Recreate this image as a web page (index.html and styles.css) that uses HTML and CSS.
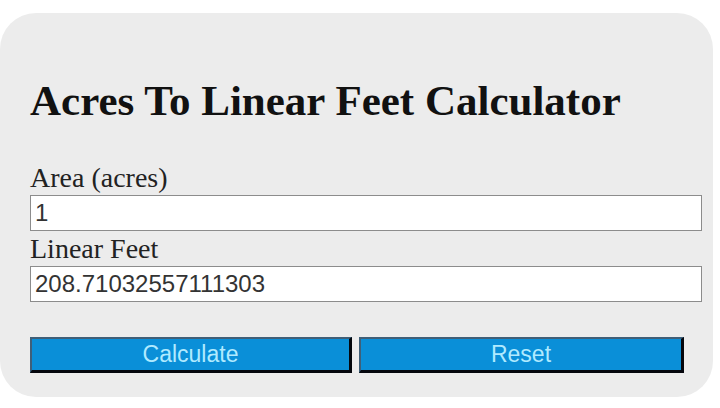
FILE: index.html
```html
<!DOCTYPE html>
<html>
	<head>
		<link rel="stylesheet" href="styles.css">
		<title>Acres To Linear Feet Calculator</title>
	</head>
	<body>
		<main class="calc">
			<h1 class="calc-title">Acres To Linear Feet Calculator</h1>
			<label class="calc-label" for="acres">Area (acres)</label>
			<input class="calc-input" id="acres" type="text" value="1">
			<label class="calc-label" for="linear_feet">Linear Feet</label>
			<input class="calc-input" id="linear_feet" type="text" value="208.71032557111303" readonly>
			<div class="calc-buttons">
				<button class="calc-btn" onclick="calculate();">Calculate</button>
				<button class="calc-btn" onclick="reset_form();">Reset</button>
			</div>
		</main>
		<script>
			function calculate(){
				var acres = parseFloat(document.getElementById("acres").value);
				if(isNaN(acres)){ return; }
				// one acre is 43560 square feet, side of the square
				document.getElementById("linear_feet").value = Math.sqrt(acres * 43560);
			}

			function reset_form(){
				document.getElementById("acres").value = "";
				document.getElementById("linear_feet").value = "";
			}
		</script>
	</body>
</html>
```
FILE: styles.css
```css
body{ margin: 0; background: #ffffff; }
.calc{ display: flex; flex-direction: column; margin: 13px 7px 0 0; height: 384px; box-sizing: border-box; padding: 64px 11px 0 30px; background: #ececec; border-radius: 36px; }
.calc-title{ margin: 0 0 36px 0; font: bold 43px/48px "Liberation Serif", serif; color: #111111; }
.calc-label{ display: block; font: 28px/34px "Liberation Serif", serif; color: #222222; }
.calc-label + .calc-input{ margin-bottom: 1px; }
.calc-input{ height: 36px; box-sizing: border-box; margin: 0; padding: 0 4px; border: 1px solid #8c8c8c; background: #ffffff; font: 24px "Liberation Sans", sans-serif; color: #333333; }
.calc-buttons{ display: flex; gap: 7px; margin-top: 34px; }
.calc-btn{ width: 322px; height: 36px; padding: 0; border-style: solid; border-width: 2px 3px 3px 2px; border-color: #3f5f78 #05070d #05070d #3f5f78; background: #0a8fd8; color: #b0eaff; font: 23px "Liberation Sans", sans-serif; }
.calc-btn + .calc-btn{ width: 325px; }
```
